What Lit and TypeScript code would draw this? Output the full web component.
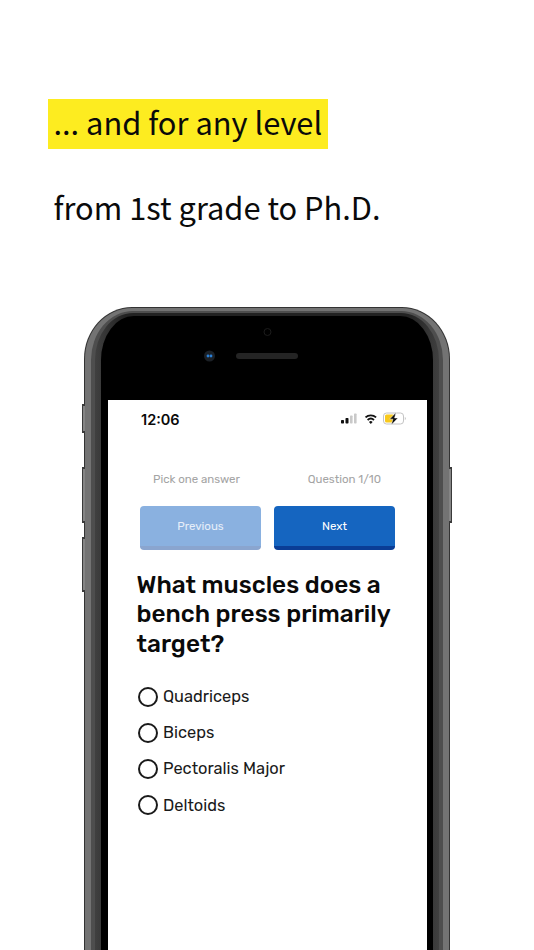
import { LitElement, html, css } from "lit";
import { customElement } from "lit/decorators.js";

const OPTIONS = ["Quadriceps", "Biceps", "Pectoralis Major", "Deltoids"];

@customElement("app-root")
export class AppRoot extends LitElement {
  static styles = css`
    :host { display: block; width: 534px; height: 950px; overflow: hidden; background: #fff; font-family: "Noto Sans CJK SC", "Noto Sans", sans-serif; color: #0a0a0a; }
    .head { padding: 99px 0 0 48px; height: 307px; box-sizing: border-box; }
    .mark { display: block; width: fit-content; background: #fdec20; font-size: 30.8px; line-height: 46px; height: 50px; padding: 0 6px 0 5.5px; white-space: nowrap; }
    .sub { font-size: 30.8px; line-height: 50px; margin: 33px 0 0 5.5px; white-space: nowrap; }
    .phone { position: relative; margin-left: 84px; width: 366px; height: 643px; }
    .btn { position: absolute; width: 3px; background: #858585; border: 1px solid #3a3a3a; border-width: 2px 0 2px 1px; box-sizing: border-box; }
    .b1 { left: -2px; top: 97px; height: 29px; }
    .b2 { left: -2px; top: 160px; height: 56px; }
    .b3 { left: -2px; top: 230px; height: 55px; }
    .b4 { right: -2px; top: 160px; height: 56px; border-width: 2px 1px 2px 0; }
    .l1 { height: 100%; box-sizing: border-box; background: #333; border-radius: 48px 48px 0 0 / 52px 52px 0 0; padding: 1px 1px 0 1px; }
    .l2 { height: 100%; box-sizing: border-box; background: #737373; border-radius: 47px 47px 0 0 / 51px 51px 0 0; padding: 3px 6px 0 6px; }
    .l3 { height: 100%; box-sizing: border-box; background: #4e4e4e; border-radius: 42px 42px 0 0 / 49px 49px 0 0; padding: 2px 4px 0 4px; }
    .l4 { height: 100%; box-sizing: border-box; background: linear-gradient(90deg, #404040, #222 30px, #222 calc(100% - 30px), #404040); border-radius: 38px 38px 0 0 / 47px 47px 0 0; padding: 3px 6px 0 6px; }
    .bezel { height: 100%; box-sizing: border-box; background: #000; border-radius: 33px 33px 0 0 / 44px 44px 0 0; padding: 84px 6px 0 7px; position: relative; display: flex; flex-direction: column; }
    .sensors { position: absolute; left: 0; top: 0; }
    .screen { flex: 1; background: #fff; font-family: Rubik, Roboto, sans-serif; display: flex; flex-direction: column; }
    .status { display: flex; justify-content: space-between; align-items: center; height: 38px; padding: 0 20px 0 33px; }
    .time { font-family: Inter, sans-serif; font-weight: 600; font-size: 14.5px; }
    .meta { display: flex; justify-content: space-between; margin-top: 31px; padding: 0 46px 0 45px; font-size: 11.5px; line-height: 20px; color: #a4a4a4; }
    .actions { display: flex; gap: 13px; margin-top: 17px; padding-left: 32px; }
    .action { width: 121px; height: 44px; box-sizing: border-box; border-radius: 4px; display: flex; align-items: center; justify-content: center; padding-bottom: 1px; font-size: 11.5px; color: #fff; }
    .prev { background: #8ab1e0; border-bottom: 4px solid #8aa5cf; color: #e6eef9; }
    .next { background: #1565c0; border-bottom: 4px solid #0a3d96; }
    h1 { margin: 19.5px 0 0; padding: 0 20px 0 28.5px; font-family: Rubik, Inter, sans-serif; font-weight: 500; font-size: 24.4px; line-height: 29.5px; color: #0a0a0a; }
    .opts { margin-top: 20.5px; padding-left: 30px; display: flex; flex-direction: column; }
    .opt { display: flex; align-items: center; gap: 5px; height: 36.2px; font-size: 16.4px; color: #1a1a1a; }
    .radio { width: 20px; height: 20px; box-sizing: border-box; border: 2px solid #1a1a1a; border-radius: 50%; }
  `;

  render() {
    return html`
      <div class="head">
        <span class="mark">... and for any level</span>
        <div class="sub">from 1st grade to Ph.D.</div>
      </div>
      <div class="phone">
        <i class="btn b1"></i><i class="btn b2"></i><i class="btn b3"></i><i class="btn b4"></i>
        <div class="l1"><div class="l2"><div class="l3"><div class="l4">
          <div class="bezel">
            <svg class="sensors" width="332" height="84" viewBox="0 0 332 84">
              <circle cx="166.5" cy="16" r="3.5" fill="none" stroke="#1c1c1c" />
              <circle cx="108.5" cy="40" r="5.5" fill="#1b2026" />
              <circle cx="107" cy="40" r="1.4" fill="#2a7fd6" />
              <circle cx="110" cy="40" r="1.4" fill="#2a7fd6" />
              <rect x="135" y="37" width="62" height="6" rx="3" fill="#242424" />
            </svg>
            <div class="screen">
              <div class="status">
                <span class="time">12:06</span>
                <svg width="66" height="14" viewBox="0 0 66 14">
                  <rect x="0" y="8" width="3" height="3.5" rx=".7" fill="#111" />
                  <rect x="4.5" y="6" width="3" height="5.5" rx=".7" fill="#111" />
                  <rect x="9" y="3.5" width="2.6" height="8" rx=".7" fill="#c9c9c9" />
                  <rect x="13" y="1.5" width="2.6" height="10" rx=".7" fill="#c9c9c9" />
                  <path d="M24.5 5.4a8 8 0 0 1 10.6 0" fill="none" stroke="#111" stroke-width="1.9" />
                  <path d="M26.6 7.9a5 5 0 0 1 6.4 0" fill="none" stroke="#111" stroke-width="1.9" />
                  <path d="M28 10a2.5 2.5 0 0 1 3.6 0L29.8 12z" fill="#111" />
                  <rect x="42.5" y="1" width="20" height="11" rx="3" fill="#fff" stroke="#c4c4c4" />
                  <rect x="44" y="2.5" width="9" height="8" rx="1.5" fill="#f8c91c" />
                  <path d="M63.8 5v3a1.6 1.6 0 0 0 0-3z" fill="#c4c4c4" />
                  <path d="M55 0.4 48.5 7.2h3.4L50.2 13l6.8-7h-3.4z" fill="#111" stroke="#fff" stroke-width=".5" />
                </svg>
              </div>
              <div class="meta"><span>Pick one answer</span><span>Question 1/10</span></div>
              <div class="actions">
                <div class="action prev">Previous</div>
                <div class="action next">Next</div>
              </div>
              <h1>What muscles does a bench press primarily target?</h1>
              <div class="opts">
                ${OPTIONS.map((o) => html`<div class="opt"><span class="radio"></span><span>${o}</span></div>`)}
              </div>
            </div>
          </div>
        </div></div></div></div>
      </div>
    `;
  }
}
